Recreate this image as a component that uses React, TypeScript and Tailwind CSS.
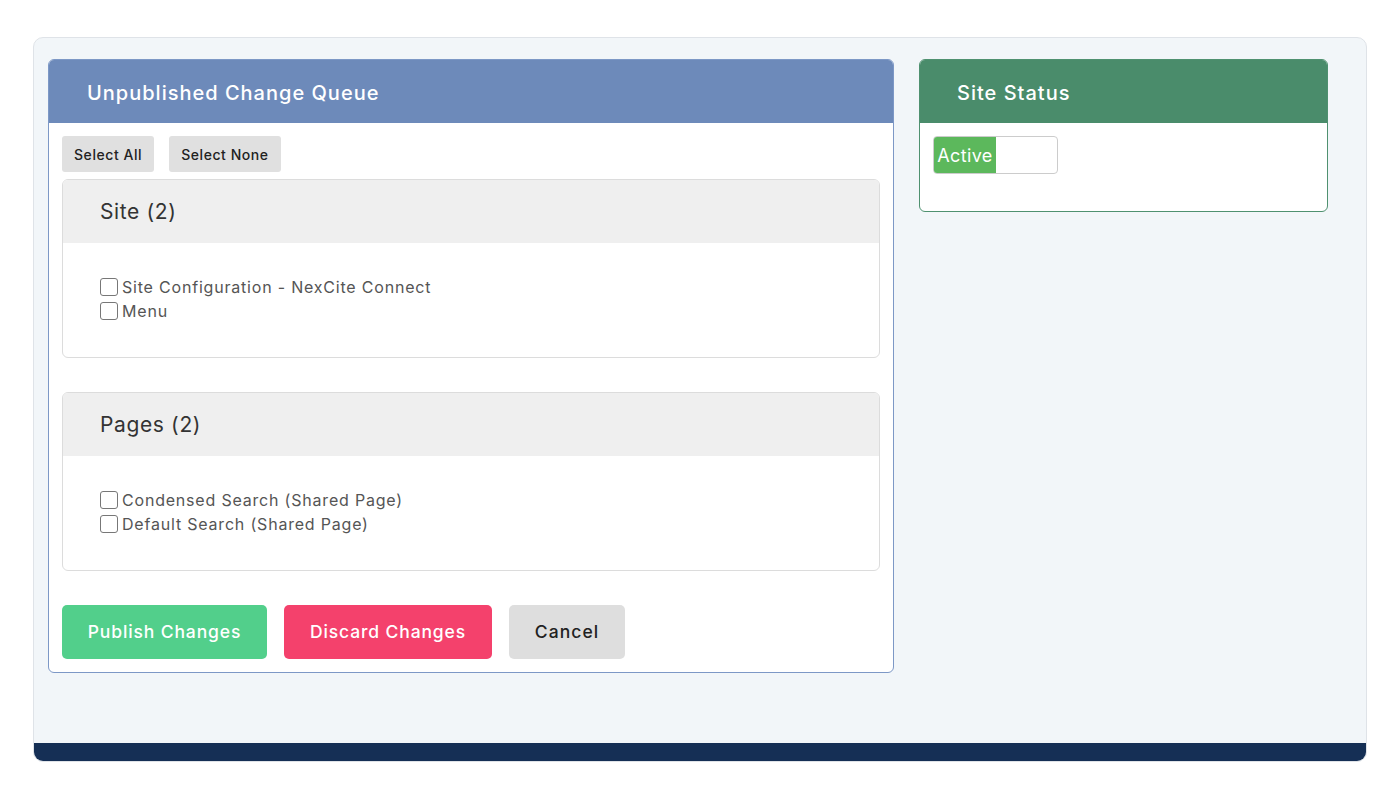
import React from "react";

const poppins = "font-['Inter',sans-serif] tracking-[0.04em]";

function Check({ label }: { label: string }) {
  return (
    <label className="flex h-6 items-center text-[16px] tracking-[0.05em] text-[#555]">
      <span className="mr-[4px] inline-block h-[18px] w-[18px] rounded-[3px] border border-[#777] bg-white" />
      {label}
    </label>
  );
}

function Section({ title, items }: { title: string; items: string[] }) {
  return (
    <div className="overflow-hidden rounded-[6px] border border-[#dcdcdc] bg-white">
      <div className="flex h-[63px] items-center bg-[#efefef] pl-[37px] text-[21px] tracking-[0.03em] text-[#333]">
        {title}
      </div>
      <div className="pl-[37px] pt-[32px] pb-[34px]">
        {items.map((it) => (
          <Check key={it} label={it} />
        ))}
      </div>
    </div>
  );
}

export default function App() {
  return (
    <div className={`min-h-[800px] bg-white pt-[37px] ${poppins}`}>
      <div className="mx-[33px] flex h-[725px] flex-col overflow-hidden rounded-[10px] border border-[#dfe3e8] bg-[#f2f6f9]">
        <div className="flex flex-1 gap-[25px] pl-[14px] pt-[21px]">
          {/* Change queue */}
          <div className="h-[614px] w-[846px] overflow-hidden rounded-[6px] border border-[#7d98c6] bg-white">
            <div className="flex h-[63px] items-center bg-[#6d8aba] pl-[38px] pt-[2px] text-[20px] font-medium tracking-[0.05em] text-white">
              Unpublished Change Queue
            </div>
            <div className="px-[13px] pt-[13px]">
              <div className="flex gap-[15px]">
                <button className="h-[36px] rounded-[3px] bg-[#e0e0e0] px-[12px] text-[14px] font-medium tracking-[0.04em] text-[#222]">
                  Select All
                </button>
                <button className="h-[36px] rounded-[3px] bg-[#e0e0e0] px-[12px] text-[14px] font-medium tracking-[0.04em] text-[#222]">
                  Select None
                </button>
              </div>
              <div className="mt-[7px] flex flex-col gap-[34px]">
                <Section title="Site (2)" items={["Site Configuration - NexCite Connect", "Menu"]} />
                <Section
                  title="Pages (2)"
                  items={["Condensed Search (Shared Page)", "Default Search (Shared Page)"]}
                />
              </div>
              <div className="mt-[34px] flex gap-[17px]">
                <button className="h-[54px] w-[205px] rounded-[5px] bg-[#52cf8b] text-[17.5px] font-medium tracking-[0.05em] text-white">
                  Publish Changes
                </button>
                <button className="h-[54px] w-[208px] rounded-[5px] bg-[#f4416c] text-[17.5px] font-medium tracking-[0.05em] text-white">
                  Discard Changes
                </button>
                <button className="h-[54px] w-[116px] rounded-[5px] bg-[#dedede] text-[17.5px] font-medium tracking-[0.06em] text-[#222]">
                  Cancel
                </button>
              </div>
            </div>
          </div>

          {/* Site status */}
          <div className="h-[153px] w-[409px] overflow-hidden rounded-[6px] border border-[#4f9170] bg-white">
            <div className="flex h-[63px] items-center bg-[#4a8c6b] pl-[37px] pt-[2px] text-[20px] font-medium tracking-[0.05em] text-white">
              Site Status
            </div>
            <div className="px-[13px] pt-[13px]">
              <div className="flex h-[38px] w-[125px] overflow-hidden rounded-[4px] border border-[#ccc]">
                <div className="flex w-[62px] items-center justify-center bg-[#5cb85c] text-[18px] tracking-[0.02em] text-white">
                  Active
                </div>
              </div>
            </div>
          </div>
        </div>
        <div className="h-[18px] bg-[#152f55]" />
      </div>
    </div>
  );
}
